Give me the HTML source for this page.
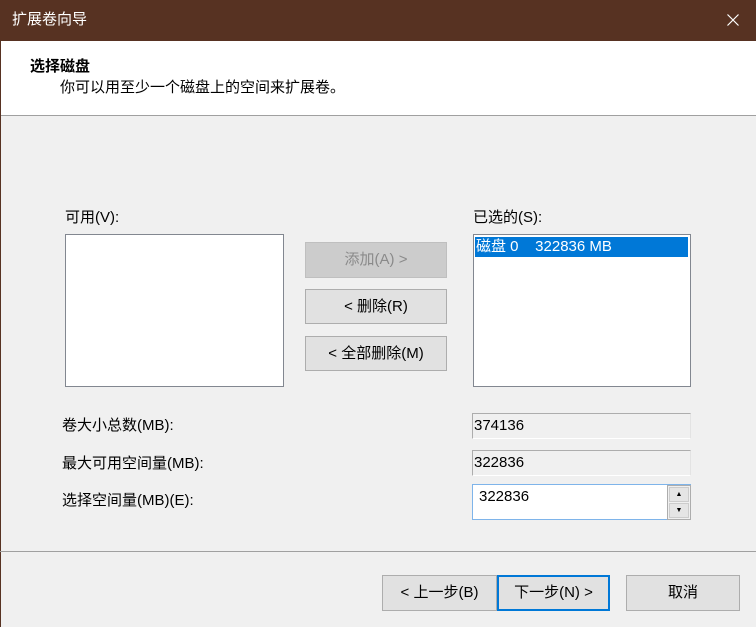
<!DOCTYPE html>
<html><head><meta charset="utf-8"><style>
*{box-sizing:border-box;margin:0;padding:0}
body{width:756px;height:627px;overflow:hidden;background:#f0f0f0;font-family:"Liberation Sans","Noto Sans CJK SC",sans-serif;font-size:15px;color:#000;position:relative}
.a{position:absolute}
.title{left:0;top:0;width:756px;height:41px;background:#573222;color:#fff;font-size:15px;line-height:40px;padding-left:12px}
.hdr{left:1px;top:41px;width:755px;height:75px;background:#fff;border-bottom:1px solid #a0a0a0}
.lb{background:#fff;border:1px solid #828790}
.btn{background:#e1e1e1;border:1px solid #adadad;text-align:center;line-height:33px}
.ro{border:1px solid #adadad;border-right-color:#e3e3e3;border-bottom-color:#fff;background:#f0f0f0;padding-left:1px;line-height:23px}
</style></head><body>
<div class="a" style="left:0;top:0;width:1px;height:627px;background:#573222"></div>
<div class="a title">扩展卷向导</div>
<svg class="a" style="left:727px;top:14px" width="12" height="12"><path d="M0.5 0.5L11.5 11.5M11.5 0.5L0.5 11.5" stroke="#fff" stroke-width="1.2"/></svg>
<div class="a hdr"></div>
<div class="a" style="left:30px;top:55px;font-weight:bold">选择磁盘</div>
<div class="a" style="left:60px;top:76px">你可以用至少一个磁盘上的空间来扩展卷。</div>
<div class="a" style="left:65px;top:206px">可用(V):</div>
<div class="a lb" style="left:65px;top:234px;width:219px;height:153px"></div>
<div class="a btn" style="left:305px;top:242px;width:142px;height:36px;color:#8a8a8a;background:#ccc;border-color:#bfbfbf">添加(A) &gt;</div>
<div class="a btn" style="left:305px;top:289px;width:142px;height:35px">&lt; 删除(R)</div>
<div class="a btn" style="left:305px;top:336px;width:142px;height:35px">&lt; 全部删除(M)</div>
<div class="a" style="left:473px;top:206px">已选的(S):</div>
<div class="a lb" style="left:473px;top:234px;width:218px;height:153px"></div>
<div class="a" style="left:475px;top:237px;width:213px;height:20px;background:#0078d7;color:#fff;line-height:20px;padding-left:1px">磁盘 0&nbsp;&nbsp;&nbsp;&nbsp;322836 MB</div>
<div class="a" style="left:62px;top:414px">卷大小总数(MB):</div>
<div class="a" style="left:62px;top:452px">最大可用空间量(MB):</div>
<div class="a" style="left:62px;top:489px">选择空间量(MB)(E):</div>
<div class="a ro" style="left:472px;top:413px;width:219px;height:26px">374136</div>
<div class="a ro" style="left:472px;top:450px;width:219px;height:26px">322836</div>
<div class="a" style="left:472px;top:484px;width:219px;height:36px;background:#fff;border:1px solid #7eb4ea;padding-left:6px;line-height:24px">322836</div>
<div class="a" style="left:667px;top:485px;width:24px;height:35px;background:#f0f0f0;border:1px solid #adadad"></div>
<div class="a" style="left:669px;top:487px;width:20px;height:15px;background:#e5e5e5;border:1px solid #ccc;font-size:7px;text-align:center;line-height:13px">▲</div>
<div class="a" style="left:669px;top:503px;width:20px;height:15px;background:#e5e5e5;border:1px solid #ccc;font-size:7px;text-align:center;line-height:13px">▼</div>
<div class="a" style="left:0;top:551px;width:756px;height:1px;background:#a0a0a0"></div>
<div class="a btn" style="left:382px;top:575px;width:115px;height:36px">&lt; 上一步(B)</div>
<div class="a btn" style="left:497px;top:575px;width:113px;height:36px;border:2px solid #0078d7;line-height:32px">下一步(N) &gt;</div>
<div class="a btn" style="left:626px;top:575px;width:114px;height:36px">取消</div>
</body></html>
